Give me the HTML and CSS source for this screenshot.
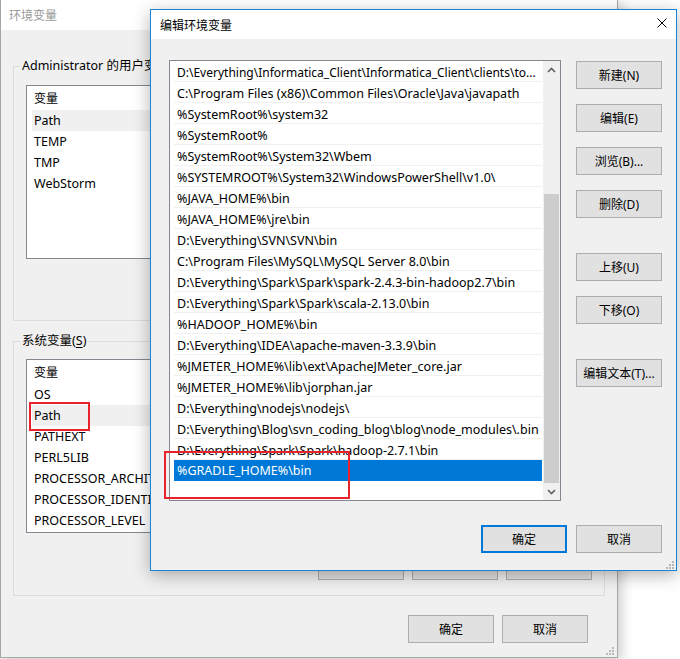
FILE: index.html
```html
<!DOCTYPE html>
<html lang="zh-CN">
<head>
<meta charset="utf-8">
<title>编辑环境变量</title>
<link rel="stylesheet" href="styles.css">
</head>
<body>
<div class="desk">
  <div class="win back">
    <div class="titlebar inactive">环境变量</div>
    <div class="back-body">
      <fieldset class="group user">
        <legend><span class="legend-text">Administrator 的用户变量(<u>U</u>)</span></legend>
        <div class="list">
          <div class="list-head"><span class="c-name">变量</span></div>
          <div class="list-row sel"><span class="c-name">Path</span></div>
          <div class="list-row"><span class="c-name">TEMP</span></div>
          <div class="list-row"><span class="c-name">TMP</span></div>
          <div class="list-row"><span class="c-name">WebStorm</span></div>
        </div>
        <div class="btn-row">
          <button class="btn" aria-label="新建"></button>
          <button class="btn" aria-label="编辑"></button>
          <button class="btn" aria-label="删除"></button>
        </div>
      </fieldset>
      <fieldset class="group sys">
        <legend>系统变量(<u>S</u>)</legend>
        <div class="list">
          <div class="list-head"><span class="c-name">变量</span></div>
          <div class="list-row"><span class="c-name">OS</span></div>
          <div class="list-row sel"><span class="c-name">Path</span></div>
          <div class="list-row"><span class="c-name">PATHEXT</span></div>
          <div class="list-row"><span class="c-name">PERL5LIB</span></div>
          <div class="list-row"><span class="c-name">PROCESSOR_ARCHITECTURE</span></div>
          <div class="list-row"><span class="c-name">PROCESSOR_IDENTIFIER</span></div>
          <div class="list-row"><span class="c-name">PROCESSOR_LEVEL</span></div>
        </div>
        <div class="btn-row">
          <button class="btn" aria-label="新建"></button>
          <button class="btn" aria-label="编辑"></button>
          <button class="btn" aria-label="删除"></button>
        </div>
      </fieldset>
      <div class="actions back-actions">
        <button class="btn">确定</button>
        <button class="btn">取消</button>
      </div>
    </div>
    <svg class="grip" width="8" height="8" viewBox="0 0 8 8"><rect x="6" y="0" width="2" height="2"/><rect x="3" y="3" width="2" height="2"/><rect x="6" y="3" width="2" height="2"/><rect x="0" y="6" width="2" height="2"/><rect x="3" y="6" width="2" height="2"/><rect x="6" y="6" width="2" height="2"/></svg>
  </div>

  <div class="win dialog">
    <div class="titlebar">
      <span>编辑环境变量</span>
      <svg class="close" width="10" height="10" viewBox="0 0 10 10"><path d="M0.5 0.5 L9.5 9.5 M9.5 0.5 L0.5 9.5" stroke="#000" stroke-width="1" fill="none"/></svg>
    </div>
    <div class="dlg-body">
      <div class="vlist">
        <div class="rows">
          <div class="row fit">D:\Everything\Informatica_Client\Informatica_Client\clients\to...</div>
          <div class="row">C:\Program Files (x86)\Common Files\Oracle\Java\javapath</div>
          <div class="row">%SystemRoot%\system32</div>
          <div class="row">%SystemRoot%</div>
          <div class="row">%SystemRoot%\System32\Wbem</div>
          <div class="row">%SYSTEMROOT%\System32\WindowsPowerShell\v1.0\</div>
          <div class="row">%JAVA_HOME%\bin</div>
          <div class="row">%JAVA_HOME%\jre\bin</div>
          <div class="row">D:\Everything\SVN\SVN\bin</div>
          <div class="row">C:\Program Files\MySQL\MySQL Server 8.0\bin</div>
          <div class="row">D:\Everything\Spark\Spark\spark-2.4.3-bin-hadoop2.7\bin</div>
          <div class="row">D:\Everything\Spark\Spark\scala-2.13.0\bin</div>
          <div class="row">%HADOOP_HOME%\bin</div>
          <div class="row">D:\Everything\IDEA\apache-maven-3.3.9\bin</div>
          <div class="row">%JMETER_HOME%\lib\ext\ApacheJMeter_core.jar</div>
          <div class="row">%JMETER_HOME%\lib\jorphan.jar</div>
          <div class="row">D:\Everything\nodejs\nodejs\</div>
          <div class="row">D:\Everything\Blog\svn_coding_blog\blog\node_modules\.bin</div>
          <div class="row">D:\Everything\Spark\Spark\hadoop-2.7.1\bin</div>
          <div class="row selected">%GRADLE_HOME%\bin</div>
        </div>
        <div class="sb">
          <div class="sb-btn"><svg width="9" height="6" viewBox="0 0 9 6"><polyline points="1,5 4.5,1.5 8,5" fill="none" stroke="#606060" stroke-width="1.6"/></svg></div>
          <div class="sb-track"><div class="sb-thumb"></div></div>
          <div class="sb-btn"><svg width="9" height="6" viewBox="0 0 9 6"><polyline points="1,1 4.5,4.5 8,1" fill="none" stroke="#606060" stroke-width="1.6"/></svg></div>
        </div>
      </div>
      <div class="side">
        <button class="btn">新建(N)</button>
        <button class="btn">编辑(E)</button>
        <button class="btn">浏览(B)...</button>
        <button class="btn">删除(D)</button>
        <button class="btn sep">上移(U)</button>
        <button class="btn">下移(O)</button>
        <button class="btn sep">编辑文本(T)...</button>
      </div>
      <div class="actions dlg-actions">
        <button class="btn default">确定</button>
        <button class="btn">取消</button>
      </div>
    </div>
    <svg class="grip" width="8" height="8" viewBox="0 0 8 8"><rect x="6" y="0" width="2" height="2"/><rect x="3" y="3" width="2" height="2"/><rect x="6" y="3" width="2" height="2"/><rect x="0" y="6" width="2" height="2"/><rect x="3" y="6" width="2" height="2"/><rect x="6" y="6" width="2" height="2"/></svg>
  </div>

  <div class="mark mark-path"></div>
  <div class="mark mark-gradle"></div>
</div>
</body>
</html>
```
FILE: styles.css
```css
* { box-sizing: border-box; }
html, body { margin: 0; padding: 0; background: #fff; }
body {
  font-family: "Noto Sans", "Noto Sans CJK SC", sans-serif;
  font-size: 12px;
  color: #000;
}
.desk {
  position: relative;
  width: 680px;
  height: 659px;
  overflow: hidden;
  background: #fff;
}
.win { position: absolute; background: #f0f0f0; }

/* ---------- background window ---------- */
.back {
  left: 0;
  top: 0;
  width: 618px;
  height: 658px;
  border: 1px solid #a6a6a6;
  border-top: 0;
  box-shadow: 3px 3px 12px rgba(0, 0, 0, 0.22);
}
.titlebar {
  background: #fff;
  display: flex;
  align-items: center;
}
.back .titlebar {
  height: 30px;
  padding-left: 8px;
  color: #999;
}
.back-body { padding: 28px 12px 0 12px; }
.group {
  margin: 0;
  padding: 10px 12px 15px 12px;
  border: 1px solid #dcdcdc;
  min-width: 0;
}
.group.user { padding-top: 11px; }
.group.user .btn-row { margin-top: 18px; }
.group.sys { margin-top: 12px; }
.group legend {
  margin-left: -6px;
  padding: 0 2px;
  line-height: 16px;
  font-size: 12.5px;
  white-space: nowrap;
}
.legend-text {
  display: block;
  max-width: 128px;
  overflow: hidden;
  white-space: nowrap;
}
.group u { text-underline-offset: 2px; }
.list {
  height: 174px;
  border: 1px solid #828790;
  background: #fff;
  overflow: hidden;
}
.list-head {
  height: 24px;
  display: flex;
  align-items: center;
  padding-left: 7px;
  white-space: nowrap;
}
.list-row {
  height: 21px;
  margin-left: 5px;
  padding-left: 2px;
  display: flex;
  align-items: center;
  white-space: nowrap;
  font-size: 12.5px;
}
.list-row.sel { background: #f0f0f0; }
.c-name {
  width: 116px;
  flex: none;
  overflow: hidden;
  white-space: nowrap;
}
.btn-row {
  display: flex;
  justify-content: flex-end;
  gap: 8px;
  margin-top: 19px;
}
.btn {
  width: 86px;
  height: 28px;
  padding: 0;
  border: 1px solid #adadad;
  background: #e1e1e1;
  font: inherit;
  color: #000;
  white-space: nowrap;
}
.btn.default { border: 2px solid #0078d7; }
.actions { display: flex; justify-content: flex-end; }
.back-actions {
  gap: 8px;
  margin-top: 19px;
  padding-right: 17px;
}
.grip {
  position: absolute;
  fill: #b9b9b9;
}
.back .grip { right: 3px; bottom: 2px; }

/* ---------- edit dialog ---------- */
.dialog {
  left: 150px;
  top: 9px;
  width: 527px;
  height: 562px;
  border: 1px solid #1883d7;
  box-shadow: 0 4px 16px rgba(0, 0, 0, 0.3);
}
.dialog .titlebar {
  height: 29px;
  padding: 0 9px 0 9px;
  justify-content: space-between;
}
.close { display: block; margin-top: -3px; }
.dlg-body {
  display: grid;
  grid-template-columns: 392px 86px;
  grid-template-rows: 441px 28px;
  column-gap: 15px;
  row-gap: 24px;
  padding: 21px 14px 17px 18px;
}
.vlist {
  border: 1px solid #828790;
  background: #fff;
  display: flex;
  overflow: hidden;
}
.rows {
  flex: 1;
  min-width: 0;
  padding: 0 1px 0 4px;
}
.row {
  height: 21px;
  line-height: 20px;
  padding: 2px 0 0 3px;
  border-bottom: 1px solid #f0f0f0;
  white-space: nowrap;
  overflow: hidden;
  font-size: 12.5px;
}
.row.fit { font-size: 12px; }
.row.selected {
  background: #0078d7;
  color: #fff;
  border-bottom-color: #0078d7;
  padding-top: 1px;
}
.sb {
  width: 17px;
  flex: none;
  background: #f0f0f0;
  display: flex;
  flex-direction: column;
}
.sb-btn {
  height: 17px;
  display: flex;
  align-items: center;
  justify-content: center;
}
.sb-btn svg { display: block; }
.sb-track {
  flex: 1;
  display: flex;
  flex-direction: column;
}
.sb-thumb {
  margin-top: auto;
  height: 289px;
  margin-left: 1px;
  margin-right: 1px;
  background: #cdcdcd;
}
.side {
  display: flex;
  flex-direction: column;
  gap: 15px;
  padding-top: 1px;
}
.side .sep { margin-top: 20px; }
.dlg-actions {
  grid-column: 1 / span 2;
  gap: 9px;
}
.dialog .grip { right: 2px; bottom: 1px; }

/* ---------- annotations ---------- */
.mark {
  position: absolute;
  border: 2px solid #e8232b;
}
.mark-path { left: 29px; top: 402px; width: 61px; height: 29px; }
.mark-gradle { left: 164px; top: 451px; width: 186px; height: 48px; }
```
